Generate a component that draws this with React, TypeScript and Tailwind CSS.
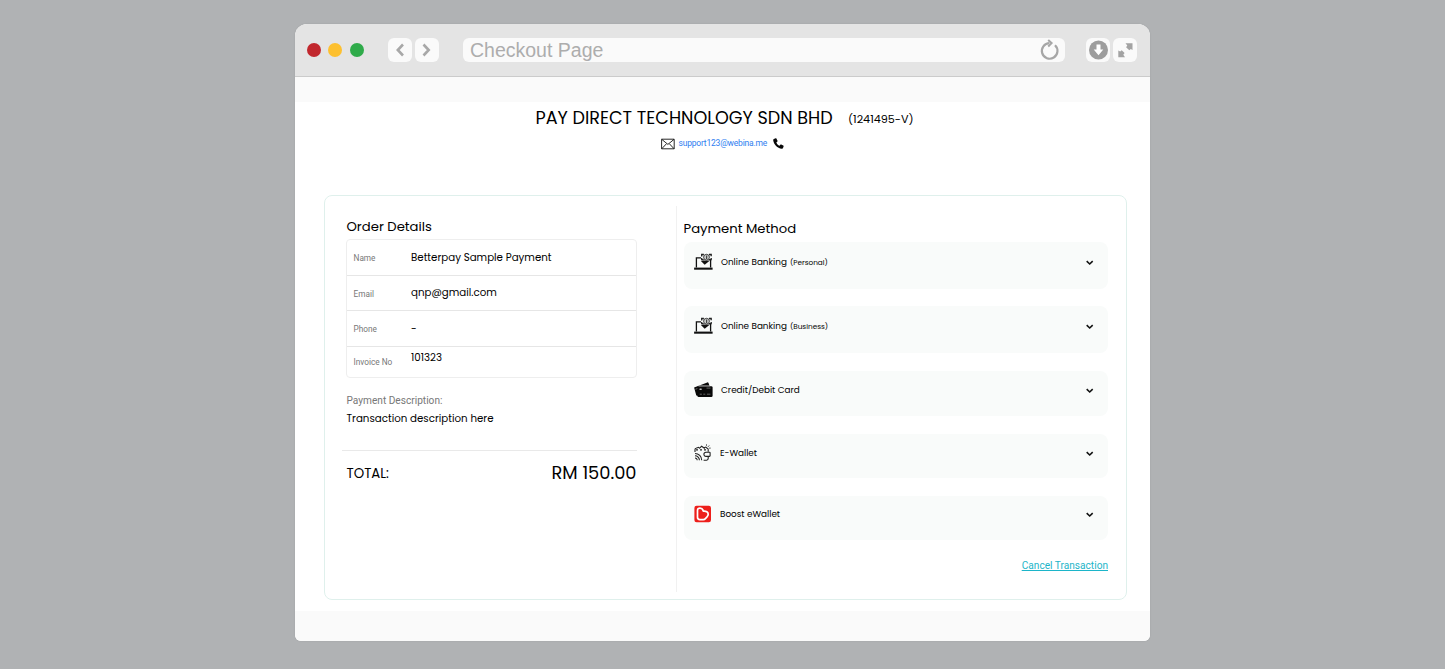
import React from "react";

const font = "font-['Poppins','Inter','Open_Sans',sans-serif]";
const roboto = "font-['Roboto',sans-serif]";

function LaptopIcon() {
  return (
    <svg width="19" height="18" viewBox="0 0 19 18" className="block" fill="none">
      <path d="M7 4.900H2.400V14.500M16.600 7v7.500" stroke="#111" strokeWidth="1.300" />
      <path d="M.1 14.600h18.500v2.100H.1z" fill="#111" />
      <path d="M9 7.500h7l-1.600 1.200-3.700 3L6.900 8z" fill="#111" />
      <path d="M7.700 3.500V1.500h2.200M15 1.500h2.200v1.800M17.200 5v1.700H15M7.700 5v1.700h2" stroke="#222" strokeWidth="1.300" />
      <circle cx="12.500" cy="4.200" r="2.900" fill="#c9cccb" stroke="#333" strokeWidth=".9" />
      <path d="M12.600 2.500v3.400" stroke="#444" strokeWidth="1.200" />
    </svg>
  );
}

function CardsIcon() {
  return (
    <svg width="19" height="18" viewBox="0 0 19 18" className="block">
      <path d="M.1 6.500 13.300 1.400c.6-.2 1 .1 1.200.6l1 2.800H6c-1.300 0-2 .7-2 2v8l-1.700-.4z" fill="#080808" />
      <rect x="3.400" y="5.300" width="15.200" height="10.700" rx="1.300" fill="#080808" />
      <path d="M1.400 8.300l2-.8M5 4.900h11" stroke="#bbb" strokeWidth=".5" />
      <rect x="5.500" y="7.400" width="2.200" height="1.700" rx=".4" fill="#bbb" />
      <path d="M12.500 7.100h4M5.700 13.200h2.200m1.400 0h2m1.600 0h3.500" stroke="#888" strokeWidth=".7" />
    </svg>
  );
}

function WalletIcon() {
  return (
    <svg width="18" height="18" viewBox="0 0 18 18" className="block" fill="none" stroke="#222" strokeWidth="1.100">
      <path d="M1 8V5.500c0-.9.400-1.300 1.200-1.300M13 4.200c.8 0 1.200.5 1.200 1.300v2.300M14.200 12.600v2c0 1.100-.6 1.600-1.600 1.600H9.600M2 5.900h2M6 5.900h2M10 5.900h2" />
      <path d="M2.200 4.200l2.300-.9 1.300 1.100M5.400 4.400l2.200-2.200 3.200 2.300M10 3.700l1.800-.6 1.400 1.300" />
      <path d="M15.500 8.200h-3.500a2.100 2.100 0 0 0 0 4.200h3.500c.4 0 .6-.2.600-.6V8.800c0-.4-.2-.6-.6-.6z" />
      <path d="M1 9.500a6.700 6.700 0 0 1 6.700 6.700M1 11.800a4.400 4.400 0 0 1 4.400 4.400M1 14a2.200 2.200 0 0 1 2.200 2.200" />
      <path d="M12.500.4v1.300M14 2.800l1.200-1.300M15.200 4.100h1.400" strokeWidth=".9" />
    </svg>
  );
}

function BoostIcon() {
  return (
    <svg width="18" height="18" viewBox="0 0 18 18" className="block">
      <rect x=".4" y=".7" width="16.600" height="16.600" rx="2.200" fill="#ed1f1b" />
      <path d="M3.500 5.600c0-1.700 1-2.500 2.500-2.500 1.700 0 2.900 1 3.300 3.100 2.900-.3 4.900.9 4.900 3.100 0 1.100-.5 1.800-1.200 2.600l-1.600 1.700c-.6.7-1.200 1-2.100 1H5.800c-1.500 0-2.300-.8-2.300-2.300z" fill="none" stroke="#fff" strokeWidth="1.700" strokeLinejoin="round" />
    </svg>
  );
}

function Chevron() {
  return (
    <svg width="8" height="6" viewBox="0 0 8 6" className="block">
      <path d="M.7 1.200 3.700 4l3-2.800" fill="none" stroke="#111" strokeWidth="1.600" />
    </svg>
  );
}

const rows = [
  { label: "Name", value: "Betterpay Sample Payment", h: "h-[36px] border-b", v: "", l: "pt-[1px]" },
  { label: "Email", value: "qnp@gmail.com", h: "h-[35px] border-b", v: "", l: "pt-[1px]" },
  { label: "Phone", value: "-", h: "h-[36px] border-b", v: "", l: "pt-[1px]" },
  { label: "Invoice No", value: "101323", h: "h-[30px]", v: "pb-[8px]", l: "pb-[1px]" },
];

const methods = [
  { icon: <LaptopIcon />, name: "Online Banking", note: "(Personal)", box: "h-[47px] mb-[17px] pt-[11px]", t: "ml-[8px]" },
  { icon: <LaptopIcon />, name: "Online Banking", note: "(Business)", box: "h-[47px] mb-[18px] pt-[11px]", t: "ml-[8px]" },
  { icon: <CardsIcon />, name: "Credit/Debit Card", note: "", box: "h-[45px] mb-[18px] pt-[10px]", t: "ml-[8px]" },
  { icon: <WalletIcon />, name: "E-Wallet", note: "", box: "h-[44px] mb-[18px] pt-[10px]", t: "ml-[8px]" },
  { icon: <BoostIcon />, name: "Boost eWallet", note: "", box: "h-[44px] mb-0 pt-[9px]", t: "ml-[8px]" },
];

export default function App() {
  return (
    <div className={`flex h-[669px] w-[1445px] justify-start bg-[#b0b2b4] pl-[295px] pt-[24px] text-black ${font}`}>
      <div className="flex h-[617px] w-[855px] flex-col overflow-hidden rounded-t-[12px] rounded-b-[6px] bg-white shadow-[0_0_2px_rgba(0,0,0,0.1)]">
        <header className="flex h-[53px] shrink-0 items-center border-b border-[#cbcbcb] bg-[#e4e4e4] pl-[11.500px]">
          <div className="flex gap-[7.500px]">
            <span className="size-[14px] rounded-full bg-[#c1272d]" />
            <span className="size-[14px] rounded-full bg-[#fdc02f]" />
            <span className="size-[14px] rounded-full bg-[#2fab4a]" />
          </div>
          <div className="ml-[24.500px] flex h-[24px] w-[24px] items-center justify-center rounded-[6px] bg-[#fafafa]">
            <svg width="12" height="16" viewBox="0 0 12 16"><path d="M9 2.500 3.800 8 9 13.500" fill="none" stroke="#a8a8a8" strokeWidth="2.600" /></svg>
          </div>
          <div className="ml-[3px] flex h-[24px] w-[24px] items-center justify-center rounded-[6px] bg-[#fafafa]">
            <svg width="12" height="16" viewBox="0 0 12 16"><path d="M2.500 2.500 7.700 8l-5.200 5.500" fill="none" stroke="#a8a8a8" strokeWidth="2.600" /></svg>
          </div>
          <div className="ml-[24px] flex h-[24px] w-[602px] items-center justify-between rounded-[6px] bg-[#fafafa] pl-[7px] pr-[6px]">
            <span className="font-['Liberation_Sans',sans-serif] text-[19.500px] leading-[24px] text-[#adadad]">Checkout Page</span>
            <svg width="20" height="22" viewBox="0 0 20 22" fill="none" stroke="#a6a6a6"><path d="M16 6.200A7.800 7.800 0 1 1 10.500 4.100" strokeWidth="2.200" /><path d="M9.200.9l3.400 3.200-3.400 3.400" strokeWidth="2" /></svg>
          </div>
          <div className="ml-[21px] flex size-[24px] items-center justify-center rounded-[6px] bg-[#fafafa]">
            <svg width="20" height="20" viewBox="0 0 20 20"><circle cx="10.500" cy="10" r="9.500" fill="#9d9d9d" /><path d="M8.500 4.500h4v5h2.800l-4.800 5.800-4.800-5.800h2.800z" fill="#fff" /></svg>
          </div>
          <div className="ml-[3px] flex size-[24px] items-center justify-center rounded-[6px] bg-[#fafafa]">
            <svg width="16" height="16" viewBox="0 0 16 16" fill="#a3a3a3"><path d="M8.500 1.200h7v6.800l-1.700-1-1.500 1.200-3.200-3 1.200-1.800zM1.300 8.600l1.900.8 1.500-1.100 2.900 2.700-1.300 1.700 1.700 2.500H1.300z" /></svg>
          </div>
        </header>
        <div className="h-[25px] shrink-0 bg-[#fafafa]" />

        <div className="ml-[240.500px] mt-[3px] flex h-[24px] items-center">
          <h1 className="w-[299px] whitespace-nowrap pt-px text-[17.600px] leading-[24px]">PAY DIRECT TECHNOLOGY SDN BHD</h1>
          <span className="ml-[13.500px] mt-[4px] whitespace-nowrap text-[11.200px]">(1241495-V)</span>
        </div>
        <div className="ml-[366px] mt-[6px] flex h-[16px] items-center">
          <svg className="mt-px" width="14" height="12" viewBox="0 0 14 12" fill="none" stroke="#111"><path d="M.6 1.200h12.600v9.600H.6zM.8 1.400l6.100 5 6.100-5M.8 10.700l4.700-5M13 10.700 8.300 5.700" strokeWidth=".9" /></svg>
          <span className={`ml-[3.500px] w-[88px] text-[8.500px] tracking-[-0.2px] text-[#2f7ef0] ${roboto}`}>support123@webina.me</span>
          <svg className="ml-[6.500px] mt-px" width="11" height="11" viewBox="0 0 11 11"><path d="M2.600.3.900.9C.3 1.100.1 1.600.2 2.200 1 6.700 4.300 10 8.800 10.800c.6.1 1-.1 1.200-.7l.6-1.700c.1-.4 0-.7-.4-.9L8.300 6.600c-.4-.2-.7-.1-1 .2l-.8 1C4.900 7 4 6 3.300 4.500l.9-.8c.4-.3.4-.6.3-1L3.500.7c-.2-.4-.5-.5-.9-.4z" fill="#080808" /></svg>
        </div>

        <main className="ml-[29px] mt-[44px] flex h-[405px] w-[803px] shrink-0 rounded-[8px] border border-[#dff0ec]">
          <section className="w-[351px] pl-[17px] pt-[21px]">
            <h2 className="ml-[4.500px] w-fit text-[13.200px] leading-[20px]">Order Details</h2>
            <div className="ml-[4px] mt-[2px] w-[291px] rounded-[4px] border border-[#eeeeee]">
              {rows.map((r) => (
                <div key={r.label} className={`flex items-center border-[#e6e6e6] ${r.h}`}>
                  <div className={`w-[64px] pl-[6.500px] text-[8.250px] leading-[12px] text-[#777] ${roboto} ${r.l}`}>{r.label}</div>
                  <div className={`whitespace-nowrap text-[10.250px] leading-[14px] ${r.v}`}>{r.value}</div>
                </div>
              ))}
            </div>
            <p className={`ml-[4.500px] mt-[15px] w-fit text-[10.140px] leading-[16px] text-[#777] ${roboto}`}>Payment Description:</p>
            <p className="ml-[4.500px] mt-[2px] w-fit text-[10.270px] leading-[16px]">Transaction description here</p>
            <div className="mt-[23px] flex h-[46px] w-[294.500px] items-center justify-between border-t border-[#e9e9e9] pl-[4.500px]">
              <span className="text-[13.300px]">TOTAL:</span>
              <span className="text-[17.800px]">RM 150.00</span>
            </div>
          </section>
          <section className="mb-[7px] mt-[10px] flex grow flex-col border-l border-[#f1f1f1] pl-[6.500px] pt-[13px]">
            <h2 className="w-fit text-[13.200px] leading-[20px]">Payment Method</h2>
            <div className="mt-[3px]">
              {methods.map((x, i) => (
                <div key={i} className={`flex w-[424.500px] items-start rounded-[8px] bg-[#f9fbfa] pl-[10.500px] ${x.box}`}>
                  {x.icon}
                  <span className={`mt-[2px] flex items-baseline gap-[3px] whitespace-nowrap text-[8.850px] leading-[14px] ${x.t}`}>
                    <span>{x.name}</span>
                    {x.note && <span className="text-[7.300px]">{x.note}</span>}
                  </span>
                  <span className="ml-auto mr-[14px] mt-[7px]"><Chevron /></span>
                </div>
              ))}
            </div>
            <a className={`ml-auto mr-[18px] mt-[18px] text-[10.130px] leading-[16px] text-[#1cb5c9] underline ${roboto}`}>Cancel Transaction</a>
          </section>
        </main>
        <div className="mt-auto h-[30px] shrink-0 bg-[#fafafa]" />
      </div>
    </div>
  );
}
